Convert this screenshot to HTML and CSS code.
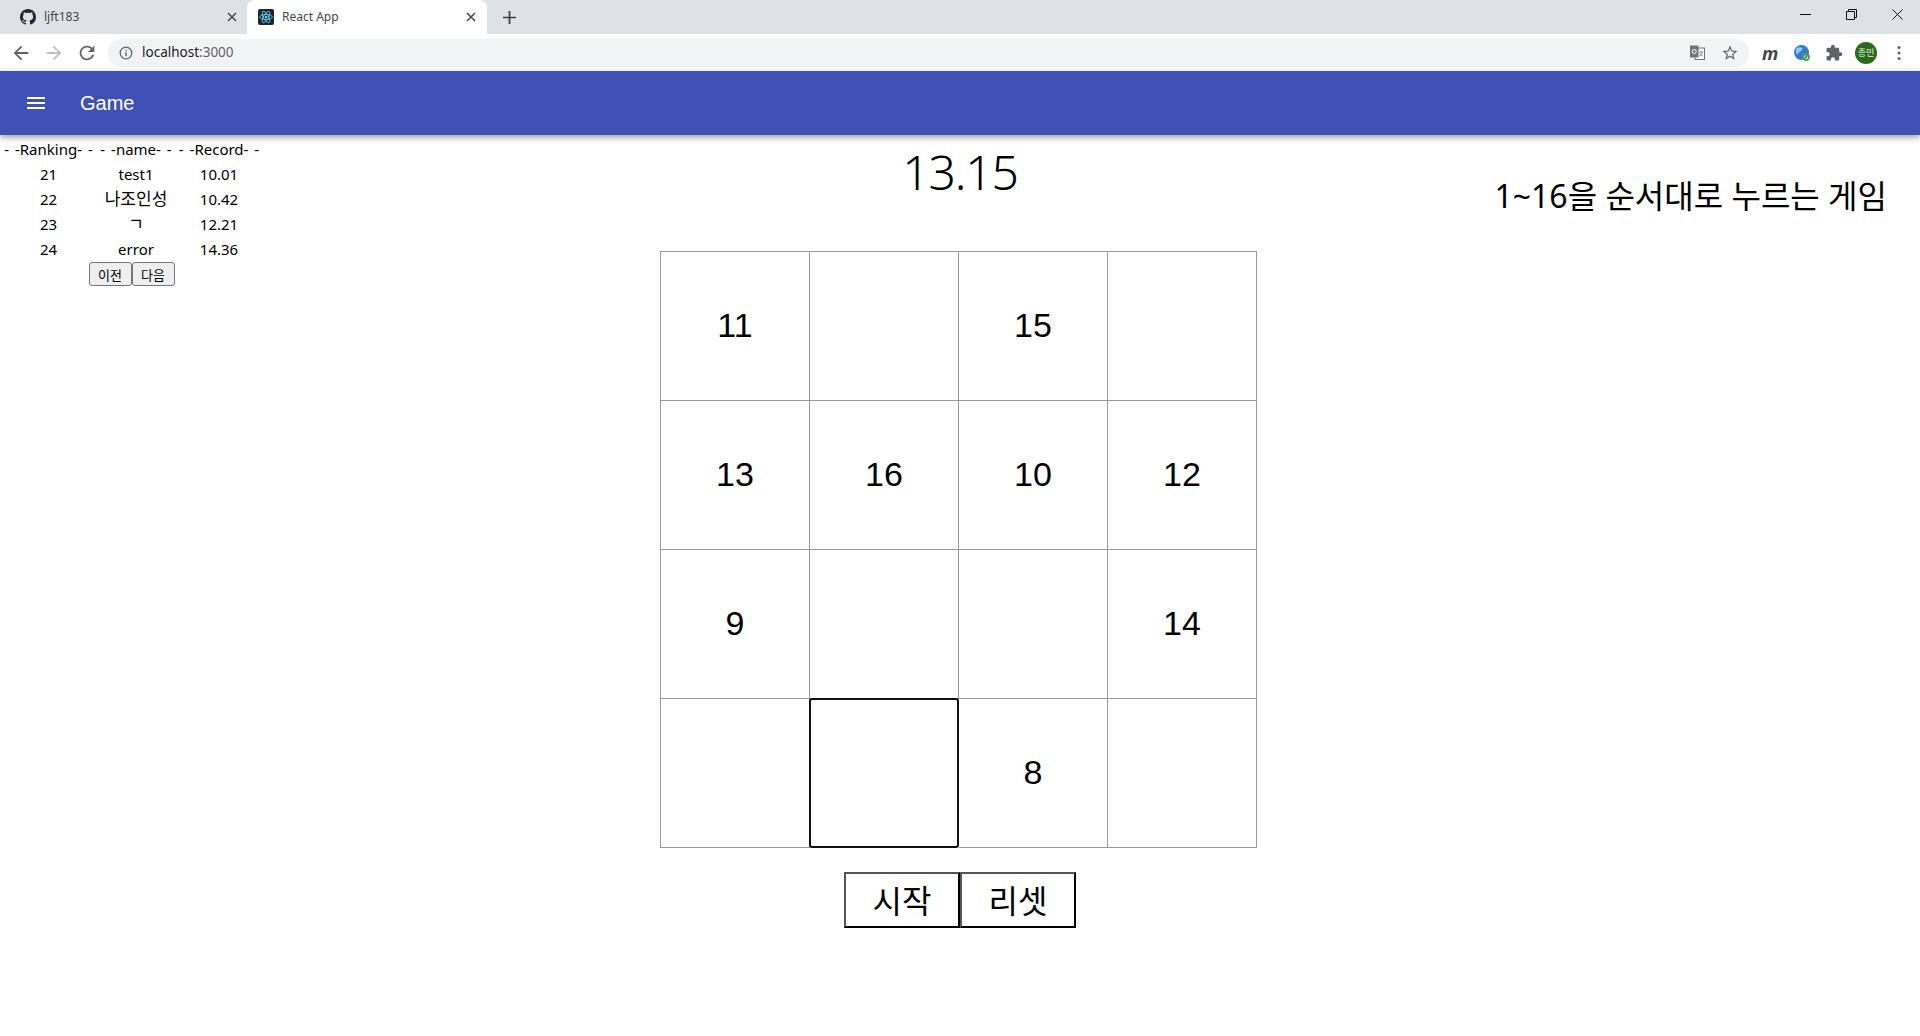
FILE: index.html
```html
<!DOCTYPE html>
<html lang="ko">
<head>
    <meta charset="UTF-8">
    <title>React App</title>
    <link rel="stylesheet" href="styles.css">
</head>
<body>
    <div class="tab-strip">
        <div class="tab">
            <svg class="favicon" viewBox="0 0 16 16"><path fill="#24292e" d="M8 0C3.58 0 0 3.58 0 8c0 3.54 2.29 6.53 5.47 7.59.4.07.55-.17.55-.38 0-.19-.01-.82-.01-1.49-2.01.37-2.53-.49-2.69-.94-.09-.23-.48-.94-.82-1.13-.28-.15-.68-.52-.01-.53.63-.01 1.08.58 1.23.82.72 1.21 1.87.87 2.33.66.07-.52.28-.87.51-1.07-1.78-.2-3.64-.89-3.64-3.95 0-.87.31-1.59.82-2.15-.08-.2-.36-1.02.08-2.12 0 0 .67-.21 2.2.82.64-.18 1.32-.27 2-.27.68 0 1.36.09 2 .27 1.53-1.04 2.2-.82 2.2-.82.44 1.1.16 1.92.08 2.12.51.56.82 1.27.82 2.15 0 3.07-1.87 3.75-3.65 3.95.29.25.54.73.54 1.48 0 1.07-.01 1.93-.01 2.2 0 .21.15.46.55.38A8.013 8.013 0 0016 8c0-4.42-3.58-8-8-8z"/></svg>
            <span class="tab-title">ljft183</span>
            <svg class="tab-close" viewBox="0 0 10 10"><path d="M1 1l8 8M9 1l-8 8" stroke="#45474a" stroke-width="1.5"/></svg>
        </div>
        <div class="tab tab-active">
            <svg class="favicon" viewBox="0 0 16 16">
                <rect width="16" height="16" rx="2" fill="#20232a"/>
                <g fill="none" stroke="#61dafb" stroke-width=".8">
                    <ellipse cx="8" cy="8" rx="6.4" ry="2.5"/>
                    <ellipse cx="8" cy="8" rx="6.4" ry="2.5" transform="rotate(60 8 8)"/>
                    <ellipse cx="8" cy="8" rx="6.4" ry="2.5" transform="rotate(120 8 8)"/>
                </g>
                <circle cx="8" cy="8" r="1.3" fill="#61dafb"/>
            </svg>
            <span class="tab-title">React App</span>
            <svg class="tab-close" viewBox="0 0 10 10"><path d="M1 1l8 8M9 1l-8 8" stroke="#45474a" stroke-width="1.5"/></svg>
        </div>
        <svg class="new-tab" viewBox="0 0 12 12"><path d="M6 0v12M0 6h12" stroke="#3c4043" stroke-width="1.6"/></svg>
        <div class="window-controls">
            <svg viewBox="0 0 11 11"><path d="M0 5.5h11" stroke="#111" stroke-width="1"/></svg>
            <svg viewBox="0 0 11 11"><path d="M.5 2.5h8v8h-8zM2.5 2.5v-2h8v8h-2" fill="none" stroke="#111"/></svg>
            <svg viewBox="0 0 11 11"><path d="M.5.5l10 10M10.5.5l-10 10" stroke="#111"/></svg>
        </div>
    </div>

    <div class="toolbar">
        <svg class="nav-icon" viewBox="0 0 24 24"><path fill="#5f6368" d="M20 11H7.83l5.59-5.59L12 4l-8 8 8 8 1.41-1.41L7.83 13H20v-2z"/></svg>
        <svg class="nav-icon" viewBox="0 0 24 24"><path fill="#bdc1c6" d="M4 11h12.17l-5.59-5.59L12 4l8 8-8 8-1.41-1.41L16.17 13H4v-2z"/></svg>
        <svg class="nav-icon" viewBox="0 0 24 24"><path fill="#5f6368" d="M17.65 6.35C16.2 4.9 14.21 4 12 4c-4.42 0-7.99 3.58-7.99 8s3.57 8 7.99 8c3.73 0 6.84-2.55 7.73-6h-2.08c-.82 2.33-3.04 4-5.65 4-3.31 0-6-2.69-6-6s2.69-6 6-6c1.66 0 3.14.69 4.22 1.78L13 11h7V4l-2.35 2.35z"/></svg>
        <div class="omnibox">
            <svg class="info-icon" viewBox="0 0 14 14">
                <circle cx="7" cy="7" r="5.8" fill="none" stroke="#5f6368" stroke-width="1.3"/>
                <path d="M7 6.2v4M7 3.8v1.4" stroke="#5f6368" stroke-width="1.4"/>
            </svg>
            <span class="url">localhost<span class="url-port">:3000</span></span>
            <svg class="translate-icon" viewBox="0 0 15 15">
                <rect x="5" y="3" width="9.5" height="11.5" fill="#fff" stroke="#70757a"/>
                <rect x="0" y="0.5" width="8.5" height="12" fill="#70757a"/>
                <circle cx="4.2" cy="6.5" r="2" fill="none" stroke="#fff" stroke-width="1"/>
                <path d="M9 7h4M11 6v1M12.5 7c-.5 2-1.8 3.4-3.3 4M9.8 8.4c.6 1.2 1.6 2.2 3 2.8" fill="none" stroke="#70757a" stroke-width=".8"/>
            </svg>
            <svg class="star-icon" viewBox="0 0 24 24"><path fill="#5f6368" d="M22 9.24l-7.19-.62L12 2 9.19 8.63 2 9.24l5.46 4.73L5.82 21 12 17.27 18.18 21l-1.63-7.03L22 9.24zM12 15.4l-3.76 2.27 1-4.28-3.32-2.88 4.38-.38L12 6.1l1.71 4.04 4.38.38-3.32 2.88 1 4.28L12 15.4z"/></svg>
        </div>
        <span class="ext-m">m</span>
        <svg class="ext-globe" viewBox="0 0 16 16">
            <circle cx="7.5" cy="7.5" r="7.5" fill="#2f7fd0"/>
            <path d="M3 3c2-1 4-1 5 0s0 2-1 3-3 1-3 3-2-1-2-2 0-3 1-4zM9 9c2-1 4 0 3 2s-3 3-3 2 0-3 0-4z" fill="#9cc9ef"/>
            <circle cx="12" cy="12" r="3" fill="none" stroke="#5aa02c" stroke-width="1.8"/>
        </svg>
        <svg class="ext-puzzle" viewBox="0 0 24 24"><path fill="#5f6368" d="M20.5 11H19V7c0-1.1-.9-2-2-2h-4V3.5C13 2.12 11.88 1 10.5 1S8 2.12 8 3.5V5H4c-1.1 0-1.99.9-1.99 2v3.8H3.5c1.49 0 2.7 1.21 2.7 2.7s-1.21 2.7-2.7 2.7H2V20c0 1.1.9 2 2 2h3.8v-1.5c0-1.49 1.21-2.7 2.7-2.7 1.49 0 2.7 1.21 2.7 2.7V22H17c1.1 0 2-.9 2-2v-4h1.5c1.38 0 2.5-1.12 2.5-2.5S21.88 11 20.5 11z"/></svg>
        <span class="avatar">종민</span>
        <svg class="menu-dots" viewBox="0 0 4 16">
            <circle cx="2" cy="2.5" r="1.5" fill="#5f6368"/>
            <circle cx="2" cy="8" r="1.5" fill="#5f6368"/>
            <circle cx="2" cy="13.5" r="1.5" fill="#5f6368"/>
        </svg>
    </div>

    <header class="app-bar">
        <svg class="menu-icon" viewBox="0 0 24 24"><path fill="#fff" d="M3 18h18v-2H3v2zm0-5h18v-2H3v2zm0-7v2h18V6H3z"/></svg>
        <span class="app-title">Game</span>
    </header>

    <main class="page">
        <section class="ranking">
            <table class="rank-table">
                <tr><th class="col-rank">- -Ranking- -</th><th class="col-name">- -name- -</th><th class="col-record">- -Record- -</th></tr>
                <tr><td>21</td><td>test1</td><td>10.01</td></tr>
                <tr><td>22</td><td class="hangul">나조인성</td><td>10.42</td></tr>
                <tr><td>23</td><td class="hangul">ㄱ</td><td>12.21</td></tr>
                <tr><td>24</td><td>error</td><td>14.36</td></tr>
            </table>
            <div class="pager">
                <button class="pager-btn">이전</button><button class="pager-btn">다음</button>
            </div>
        </section>

        <section class="game">
            <div class="timer">13.15</div>
            <div class="board">
                <div class="cell">11</div>
                <div class="cell"></div>
                <div class="cell">15</div>
                <div class="cell"></div>
                <div class="cell">13</div>
                <div class="cell">16</div>
                <div class="cell">10</div>
                <div class="cell">12</div>
                <div class="cell">9</div>
                <div class="cell"></div>
                <div class="cell"></div>
                <div class="cell">14</div>
                <div class="cell"></div>
                <div class="cell cell-focus"></div>
                <div class="cell">8</div>
                <div class="cell"></div>
            </div>
            <div class="controls">
                <button class="control-btn">시작</button><button class="control-btn">리셋</button>
            </div>
        </section>

        <section class="intro">1~16을 순서대로 누르는 게임</section>
    </main>
</body>
</html>
```

FILE: styles.css
```css
body {
    margin: 0;
    font-family: "Noto Sans", "Noto Sans CJK KR", sans-serif;
    color: #000;
    background: #fff;
    overflow: hidden;
}

/* browser chrome */
.tab-strip {
    height: 34px;
    background: #dee1e6;
    display: flex;
    align-items: center;
}
.tab {
    width: 247px;
    height: 34px;
    box-sizing: border-box;
    padding: 0 10px 0 20px;
    display: flex;
    align-items: center;
    font-size: 12px;
    color: #45474a;
}
.tab-active {
    width: 240px;
    padding-left: 11px;
    padding-right: 11px;
    margin-right: 16px;
    background: #fff;
    border-radius: 8px 8px 0 0;
}
.favicon {
    width: 16px;
    height: 16px;
    margin-right: 8px;
}
.tab-title {
    flex-grow: 1;
    margin-top: -1px;
}
.tab-close {
    width: 10px;
    height: 10px;
}
.new-tab {
    width: 13px;
    height: 13px;
}
.window-controls {
    margin-left: auto;
    margin-right: 17px;
    display: flex;
    gap: 35px;
}
.window-controls svg {
    width: 11px;
    height: 11px;
    margin-top: -6px;
}

.toolbar {
    height: 37px;
    display: flex;
    align-items: center;
    background: #fff;
    padding-left: 10px;
}
.nav-icon {
    width: 22px;
    height: 22px;
    margin-right: 11px;
}
.omnibox {
    width: 1641px;
    height: 28px;
    margin-left: -1px;
    box-sizing: border-box;
    padding: 0 10px 0 11px;
    background: #f1f3f4;
    border-radius: 14px;
    display: flex;
    align-items: center;
    font-size: 13.5px;
    color: #202124;
}
.info-icon {
    width: 14px;
    height: 14px;
    margin-right: 9px;
}
.url {
    flex-grow: 1;
    margin-top: -2px;
}
.url-port {
    color: #5f6368;
}
.translate-icon {
    width: 15px;
    height: 15px;
    margin-right: 16px;
}
.star-icon {
    width: 18px;
    height: 18px;
}
.ext-m {
    width: 16px;
    margin-left: 13px;
    font-size: 18px;
    font-weight: 700;
    font-style: italic;
    line-height: 18px;
    color: #444;
    text-align: center;
}
.ext-globe {
    width: 16px;
    height: 16px;
    margin-left: 16px;
}
.ext-puzzle {
    width: 18px;
    height: 18px;
    margin-left: 15px;
}
.avatar {
    width: 22px;
    height: 22px;
    margin-left: 12px;
    border-radius: 50%;
    background: #2a6b1a;
    color: #e8f0e4;
    font-size: 9px;
    line-height: 22px;
    text-align: center;
}
.menu-dots {
    width: 4px;
    height: 16px;
    margin-left: 20px;
}

/* app */
.app-bar {
    height: 64px;
    background: #3f51b5;
    color: #fff;
    display: flex;
    align-items: center;
    padding-left: 24px;
    box-shadow: 0 2px 4px -1px rgba(0, 0, 0, .2), 0 4px 5px rgba(0, 0, 0, .14), 0 1px 10px rgba(0, 0, 0, .12);
    position: relative;
}
.menu-icon {
    width: 24px;
    height: 24px;
    margin-right: 32px;
}
.app-title {
    font-family: "Liberation Sans", sans-serif;
    font-size: 20px;
}

.page {
    display: grid;
    grid-template-columns: 660px 600px 660px;
}

.ranking {
    width: 263px;
    padding-top: 1px;
}
.rank-table {
    width: 263px;
    table-layout: fixed;
    border-spacing: 0;
    font-size: 15px;
}
.col-rank {
    width: 97px;
}
.col-name {
    width: 78px;
}
.col-record {
    width: 88px;
}
.rank-table th {
    font-weight: 400;
    padding: 2px 0;
    white-space: nowrap;
    word-spacing: 2px;
}
.rank-table td {
    text-align: center;
    padding: 2px 0;
}
.rank-table .hangul {
    font-size: 17px;
    line-height: 20px;
}
.rank-table tr {
    height: 25px;
}
.pager {
    display: flex;
    justify-content: center;
    margin-top: 1px;
}
.pager-btn {
    width: 43px;
    height: 24px;
    padding: 0;
    box-sizing: border-box;
    font-family: inherit;
    font-size: 13px;
    color: #000;
    background: #efefef;
    border: 1px solid #767676;
    border-radius: 3px;
}

.game {
    display: flex;
    flex-direction: column;
}
.timer {
    height: 116px;
    text-align: center;
    font-size: 48px;
    font-weight: 300;
    line-height: 74px;
    letter-spacing: -1.2px;
}
.board {
    width: 597px;
    height: 597px;
    box-sizing: border-box;
    display: grid;
    grid-template-columns: repeat(4, 149px);
    grid-template-rows: repeat(4, 149px);
    border-top: 1px solid #999;
    border-left: 1px solid #999;
}
.cell {
    box-sizing: border-box;
    padding-bottom: 2px;
    border-right: 1px solid #999;
    border-bottom: 1px solid #999;
    display: flex;
    align-items: center;
    justify-content: center;
    font-family: "Liberation Sans", sans-serif;
    font-size: 34px;
}
.cell-focus {
    margin: -1px 0 0 -1px;
    border: 2px solid #111;
    border-radius: 3px;
}
.controls {
    display: flex;
    justify-content: center;
    margin-top: 24px;
}
.control-btn {
    width: 116px;
    height: 56px;
    padding: 0 0 2px;
    box-sizing: border-box;
    font-family: inherit;
    font-size: 32px;
    color: #000;
    background: #fff;
    border: 2px outset #555;
}

.intro {
    padding: 37px 33px 0 0;
    text-align: right;
    font-size: 32px;
    line-height: 48px;
}
```
